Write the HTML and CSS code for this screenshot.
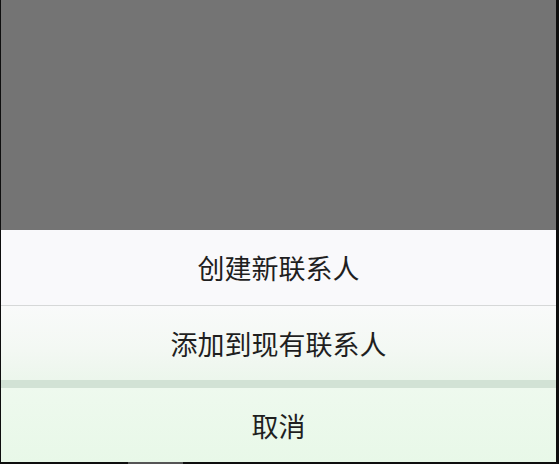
FILE: index.html
```html
<!DOCTYPE html>
<html lang="zh-CN">

<head>
    <meta charset="UTF-8">
    <meta name="viewport" content="width=device-width, initial-scale=1.0">
    <title>联系人</title>
    <link rel="stylesheet" href="styles.css">
</head>

<body>
    <div class="screen">
        <div class="overlay"></div>

        <div class="sheet">
            <div class="option first">创建新联系人</div>
            <div class="option second">添加到现有联系人</div>
        </div>

        <div class="divider"></div>

        <div class="option cancel">取消</div>
    </div>

    <div class="navbar">
        <div class="navbar-thumb"></div>
    </div>
</body>

</html>
```

FILE: styles.css
```css
html,
body {
    margin: 0;
    padding: 0;
    background-color: #0e0e0e;
}

body {
    width: 559px;
    height: 464px;
    overflow: hidden;
    font-family: "Noto Sans CJK SC", "Noto Sans", sans-serif;
}

.screen {
    display: flex;
    flex-direction: column;
    width: 555px;
    height: 462px;
    margin-left: 1px;
}

.overlay {
    height: 230px;
    background-color: #747474;
}

.option {
    display: flex;
    align-items: center;
    justify-content: center;
    font-size: 27px;
    color: #1f1f1f;
}

.first {
    height: 75px;
    background-color: #f9f9fb;
    border-bottom: 1px solid #d6d8d8;
}

.second {
    height: 74px;
    background: linear-gradient(to bottom, #f9fafa 0%, #f3f8f3 60%, #ecf6ec 100%);
}

.divider {
    height: 8px;
    background-color: #d2e2d5;
}

.cancel {
    flex: 1;
    background: linear-gradient(to bottom, #eef9ee 0%, #e8f8e8 100%);
}

.navbar {
    height: 2px;
    background-color: #0e0e0e;
}

.navbar-thumb {
    width: 55px;
    height: 2px;
    margin-left: 128px;
    background-color: #555;
}
```
